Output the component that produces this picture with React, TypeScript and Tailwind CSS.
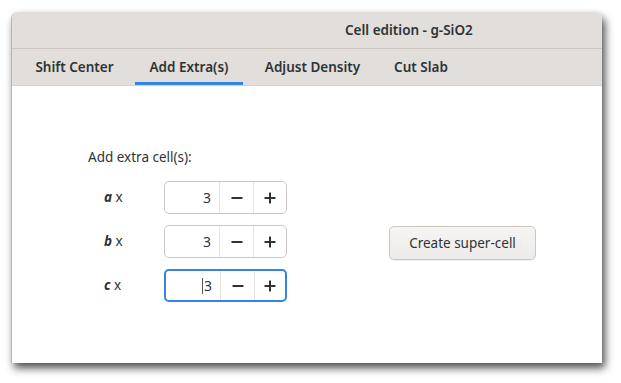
import React from 'react';

const font = { fontFamily: '"Noto Sans", "Open Sans", sans-serif' };

function Minus() {
  return (
    <svg width="12" height="12" viewBox="0 0 12 12">
      <rect x="0.5" y="5" width="11" height="2" fill="#2e3436" />
    </svg>
  );
}

function Plus() {
  return (
    <svg width="12" height="12" viewBox="0 0 12 12">
      <rect x="0.5" y="5" width="11" height="2" fill="#2e3436" />
      <rect x="5" y="0.5" width="2" height="11" fill="#2e3436" />
    </svg>
  );
}

function Spin({ focused }: { focused?: boolean }) {
  return (
    <div
      className={`flex h-[33px] w-[123px] rounded-[5px] bg-white ${
        focused ? 'border-2 border-[#3584e4]' : 'border border-[#cdc7c2]'
      }`}
    >
      <div className="relative flex w-[54px] items-center justify-end pr-[8px] text-[14px] text-[#2e3436]">
        {focused && <span className="mr-[1px] h-[16px] w-px bg-[#555]" />}
        3
      </div>
      <div className="flex w-[34px] items-center justify-center border-l border-[#e6e3e0]">
        <Minus />
      </div>
      <div className="flex flex-1 items-center justify-center border-l border-[#e6e3e0]">
        <Plus />
      </div>
    </div>
  );
}

const tabs = [
  { name: 'Shift Center', w: 'w-[105px]' },
  { name: 'Add Extra(s)', w: 'w-[108px]', active: true },
  { name: 'Adjust Density', w: 'w-[123px]' },
  { name: 'Cut Slab', w: 'w-[78px]' },
];

export default function App() {
  return (
    <div className="h-[383px] w-[621px] bg-white pl-[11px] pt-[12px]" style={font}>
      <div className="flex h-[351px] w-[591px] flex-col overflow-hidden rounded-t-[7px] border-l border-[#b8b4b0] bg-white shadow-[3px_5px_8px_rgba(0,0,0,0.7)]">
        {/* Title bar */}
        <div className="flex h-[37px] items-center border-b border-[#cbc6c1] bg-[#e1dedb] pl-[333px] text-[13.5px] font-semibold text-[#2e3436]">
          Cell edition - g-SiO2
        </div>

        {/* Tabs */}
        <div className="flex h-[37px] gap-2 border-b border-[#d6d2ce] bg-[#e1dedb] pl-[10px]">
          {tabs.map((t) => (
            <div
              key={t.name}
              className={`flex ${t.w} items-center justify-center border-b-[3px] pt-[3px] text-[13.5px] font-semibold text-[#2e3436] ${
                t.active ? 'border-[#3584e4]' : 'border-transparent'
              }`}
            >
              {t.name}
            </div>
          ))}
        </div>

        {/* Content */}
        <div className="flex flex-1 pl-[76px] pt-[62px] text-[13.5px] text-[#2e3436]">
          <div className="flex flex-col">
            <div className="h-[18px] leading-[18px]">Add extra cell(s):</div>
            <div className="mt-[15px] flex flex-col gap-[11px] pl-[16px]">
              {['a', 'b', 'c'].map((l) => (
                <div key={l} className="flex items-center">
                  <div className="w-[60px]">
                    <span className="font-bold italic">{l}</span> x
                  </div>
                  <Spin focused={l === 'c'} />
                </div>
              ))}
            </div>
          </div>
          <div className="ml-[102px] mt-[78px]">
            <div className="flex h-[34px] w-[147px] items-center justify-center rounded-[5px] border border-[#cdc7c2] bg-gradient-to-b from-[#f6f5f4] to-[#edebe9] shadow-[0_1px_1px_rgba(0,0,0,0.07)]">
              Create super-cell
            </div>
          </div>
        </div>
      </div>
    </div>
  );
}
